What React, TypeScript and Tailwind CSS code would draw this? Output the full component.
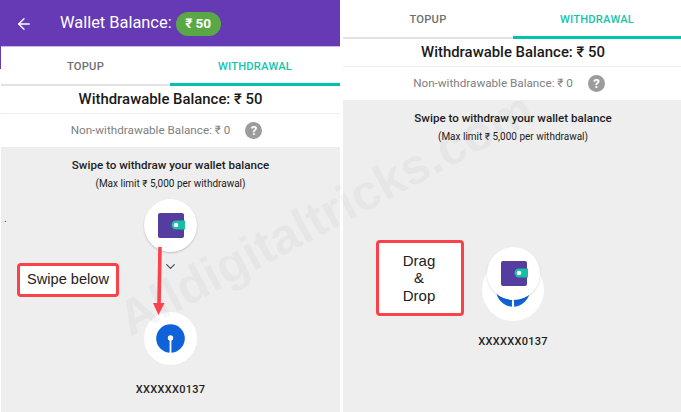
import { ArrowLeft, ChevronDown } from "lucide-react";

const FONT = "font-['Roboto','Noto_Sans',sans-serif]";

function WalletIcon() {
  return (
    <svg className="ml-[1px]" width="27" height="25" viewBox="0 0 27 25">
      <rect x="0" y="0" width="26" height="25" rx="2" fill="#553c9f" />
      <path d="M27 7.5H18a4.2 4.2 0 0 0 0 9h9z" fill="#17bfa7" />
      <circle cx="18" cy="12" r="2.3" fill="#fff" />
    </svg>
  );
}

function SbiIcon({ size = 29 }: { size?: number }) {
  return (
    <svg width={size} height={size} viewBox="0 0 29 29">
      <circle cx="14.5" cy="14.5" r="14.3" fill="#0f62d8" />
      <rect x="13.6" y="14" width="1.8" height="15" fill="#fff" />
      <circle cx="14.5" cy="14" r="2.7" fill="#fff" />
    </svg>
  );
}

function Tabs({ topupClass }: { topupClass: string }) {
  return (
    <div className="flex h-[39px] border-b-2 border-[#e2e2e2] bg-white pt-[3px] text-[11.2px] font-medium tracking-[0.2px]">
      <div className={`flex items-center justify-center text-[#6e6e6e] ${topupClass}`}>TOPUP</div>
      <div className="relative flex flex-1 items-center justify-center text-[#17c3ae]">
        WITHDRAWAL
        <div className="absolute -bottom-[2px] left-0 right-0 h-[3px] bg-[#00c2ad]" />
      </div>
    </div>
  );
}

function Balances({ shift }: { shift: string }) {
  return (
    <>
      <div className={`flex h-[28px] items-center justify-center border-b border-[#eeeeee] bg-white text-[14.9px] font-medium text-[#1a1a1a] ${shift}`}>
        Withdrawable Balance: ₹ 50
      </div>
      <div className={`flex h-[33px] items-center justify-center gap-[15px] bg-white pr-[8px] text-[11.7px] text-[#808080] ${shift}`}>
        <span>Non-withdrawable Balance: ₹ 0</span>
        <span className="flex h-[17px] w-[17px] items-center justify-center rounded-full bg-[#9c9c9c] text-[13px] font-bold text-white">
          ?
        </span>
      </div>
    </>
  );
}

function Instructions({ shift }: { shift: string }) {
  return (
    <div className={`flex flex-col items-center pt-[11px] text-[#1c1c1c] ${shift}`}>
      <div className="text-[11.6px] font-medium leading-[14px]">Swipe to withdraw your wallet balance</div>
      <div className="mt-[6px] text-[10px] leading-[12px]">(Max limit ₹ 5,000 per withdrawal)</div>
    </div>
  );
}

function Callout({ className, children }: { className: string; children: React.ReactNode }) {
  return (
    <div
      className={`absolute flex items-center justify-center rounded-[4px] border-[3px] border-[#fb4149] bg-white text-center text-[#222] font-['Liberation_Sans',sans-serif] ${className}`}
    >
      {children}
    </div>
  );
}

export default function App() {
  return (
    <div className={`relative flex h-[412px] w-[681px] overflow-hidden bg-white ${FONT}`}>
      {/* left phone */}
      <div className="relative flex w-[340px] flex-col pl-[1px]">
        <div className="-ml-[1px] flex h-[46px] items-center bg-[#6639b5] pt-[1px] text-white">
          <ArrowLeft size={18} strokeWidth={1.8} className="ml-[15px] mr-[27px]" />
          <span className="text-[16.4px] leading-none">Wallet Balance:</span>
          <span className="ml-[4px] flex h-[24px] w-[45px] items-center justify-center rounded-full bg-[#5aa845] text-[13.5px] font-bold">
            ₹ 50
          </span>
        </div>
        <div className="h-[1px] bg-[#c9b8e6]" />
        <Tabs topupClass="w-[169px]" />
        <Balances shift="pl-0" />
        <div className="relative flex flex-1 flex-col items-center bg-[#eeeeee]">
          <Instructions shift="pl-0" />
          <div className="mt-[9px] flex h-[53px] w-[53px] items-center justify-center rounded-full bg-white shadow-[0_1px_2px_rgba(0,0,0,0.2)]">
            <WalletIcon />
          </div>
          <ChevronDown size={15} strokeWidth={1.7} className="mt-[7px] text-[#444]" />
          <div className="mt-[38px] flex h-[53px] w-[53px] items-center justify-center rounded-full bg-white">
            <SbiIcon />
          </div>
          <div className="mt-[17px] text-[11px] font-medium tracking-[0.3px] text-[#1c1c1c]">XXXXXX0137</div>
          <span className="absolute left-[3px] top-[67px] text-[10px] leading-none text-[#333]">.</span>
        </div>
        <div className="absolute left-0 top-[46px] h-[23px] w-[1px] bg-[#6639b5]" />
      </div>

      {/* white gap between the two shots */}
      <div className="w-[3px] bg-white" />

      {/* right phone */}
      <div className="relative flex w-[338px] flex-col">
        <Tabs topupClass="w-[170px]" />
        <Balances shift="pl-[2px]" />
        <div className="relative flex flex-1 flex-col items-center bg-[#eeeeee]">
          <Instructions shift="pl-[2px]" />
          <div className="relative mt-[104px] ml-[2px] h-[74px] w-[62px]">
            <div className="absolute left-0 top-[12px] flex h-[62px] w-[62px] items-center justify-center overflow-hidden rounded-full bg-white">
              <SbiIcon size={34} />
            </div>
            <div className="absolute left-[5px] top-0 flex h-[53px] w-[53px] items-center justify-center rounded-full bg-white shadow-[0_1px_2px_rgba(0,0,0,0.15)]">
              <WalletIcon />
            </div>
          </div>
          <div className="ml-[2px] mt-[13px] text-[11px] font-medium tracking-[0.3px] text-[#1c1c1c]">XXXXXX0137</div>
        </div>
      </div>

      {/* watermark */}
      <div className="pointer-events-none absolute left-[122px] top-[297px] origin-left -rotate-[28deg] whitespace-nowrap text-[50px] leading-none font-bold text-[#000]/[0.03] font-['Liberation_Sans',sans-serif]">
        Alldigitaltricks.com
      </div>

      {/* annotations */}
      <Callout className="left-[17px] top-[263px] h-[34px] w-[102px] text-[14.6px]">Swipe below</Callout>
      <Callout className="left-[376px] top-[240px] h-[76px] w-[88px] pr-[2px] text-[15px] leading-[17.5px]">
        <span>
          Drag
          <br />&amp;
          <br />
          Drop
        </span>
      </Callout>
      <svg className="absolute left-[150px] top-[245px]" width="20" height="80" viewBox="0 0 20 80">
        <path d="M10 2L9 60" stroke="#fb4149" strokeWidth="3.6" fill="none" />
        <path d="M3 58H14.5L8.5 70z" fill="#fb4149" />
      </svg>
    </div>
  );
}
